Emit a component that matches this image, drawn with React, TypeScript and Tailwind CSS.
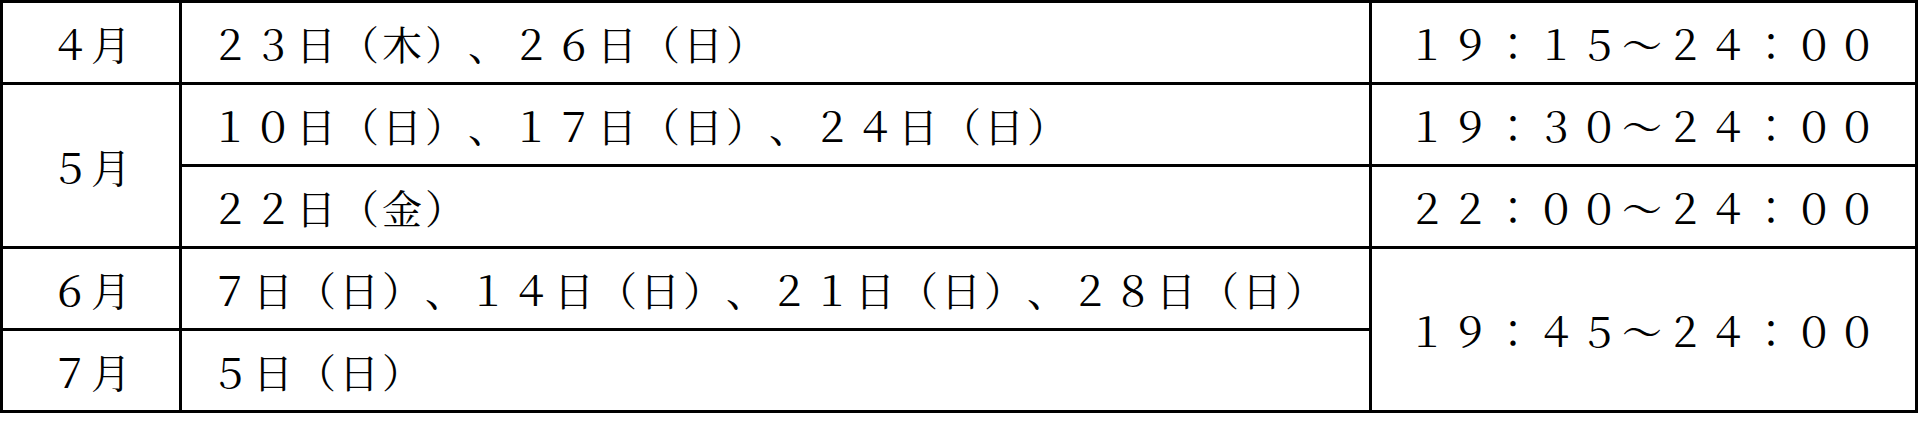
const font = { fontFamily: '"Noto Serif CJK JP", "Noto Sans CJK JP", serif' };

const cell = "border-[3px] border-black align-middle p-0";
const month = `${cell} text-center tracking-[1px]`;
const days = `${cell} pl-[28px] tracking-[3px]`;
const time = `${cell} text-center tracking-[3px]`;

export default function App() {
  return (
    <div className="w-[1920px] h-[422px] bg-white text-black" style={font}>
      <table className="table-fixed border-collapse w-[1918px] text-[40px] leading-none [text-spacing-trim:space-all]">
        <colgroup>
          <col className="w-[179px]" />
          <col className="w-[1190px]" />
          <col />
        </colgroup>
        <tbody>
          <tr className="h-[82px]">
            <td className={month}>４月</td>
            <td className={days}>２３日（木）、２６日（日）</td>
            <td className={time}>１９：１５～２４：００</td>
          </tr>
          <tr className="h-[82px]">
            <td rowSpan={2} className={month}>５月</td>
            <td className={days}>１０日（日）、１７日（日）、２４日（日）</td>
            <td className={time}>１９：３０～２４：００</td>
          </tr>
          <tr className="h-[82px]">
            <td className={days}>２２日（金）</td>
            <td className={time}>２２：００～２４：００</td>
          </tr>
          <tr className="h-[82px]">
            <td className={month}>６月</td>
            <td className={days}>７日（日）、１４日（日）、２１日（日）、２８日（日）</td>
            <td rowSpan={2} className={time}>１９：４５～２４：００</td>
          </tr>
          <tr className="h-[82px]">
            <td className={month}>７月</td>
            <td className={days}>５日（日）</td>
          </tr>
        </tbody>
      </table>
    </div>
  );
}
